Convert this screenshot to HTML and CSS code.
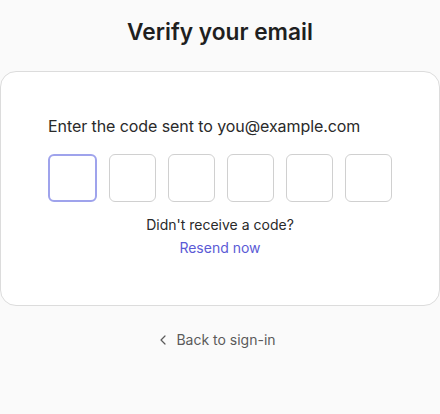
FILE: index.html
```html
<!DOCTYPE html>
<html lang="en">
<head>
    <meta charset="UTF-8">
    <meta name="viewport" content="width=device-width, initial-scale=1.0">
    <title>Verify your email</title>
    <link rel="stylesheet" href="styles.css">
</head>
<body>
<main class="page">
    <h1 class="title">Verify your email</h1>

    <div class="card">
        <p class="lead">Enter the code sent to you@example.com</p>
        <div class="code">
            <input class="digit digit-active" type="text" maxlength="1" aria-label="Digit 1">
            <input class="digit" type="text" maxlength="1" aria-label="Digit 2">
            <input class="digit" type="text" maxlength="1" aria-label="Digit 3">
            <input class="digit" type="text" maxlength="1" aria-label="Digit 4">
            <input class="digit" type="text" maxlength="1" aria-label="Digit 5">
            <input class="digit" type="text" maxlength="1" aria-label="Digit 6">
        </div>
        <p class="hint">Didn't receive a code?</p>
        <a class="resend" href="#">Resend now</a>
    </div>

    <a class="back" href="#">
        <svg width="10" height="10" viewBox="0 0 10 10" fill="none" stroke="currentColor" stroke-width="1.2" stroke-linecap="round" stroke-linejoin="round">
            <path d="M7 1 3 5l4 4"/>
        </svg>
        Back to sign-in
    </a>
</main>
</body>
</html>
```

FILE: styles.css
```css
:root {
    --bg-color: #fafafa;
    --card-bg: #ffffff;
    --border-color: #dcdcdc;
    --text-color: #1f1f1f;
    --muted-color: #5a5a5a;
    --accent-color: #5b5bd6;
    --focus-color: #9fa3ec;
}

* {
    margin: 0;
    padding: 0;
    box-sizing: border-box;
}

body {
    font-family: Inter, 'Noto Sans', sans-serif;
    background: var(--bg-color);
    color: var(--text-color);
}

.page {
    display: flex;
    flex-direction: column;
    align-items: center;
    padding-top: 18px;
}

.title {
    font-size: 22.7px;
    line-height: 28px;
    font-weight: 600;
    margin-bottom: 25px;
}

.card {
    width: 440px;
    background: var(--card-bg);
    border: 1px solid var(--border-color);
    border-radius: 16px;
    padding: 42px 47px 47px;
    display: flex;
    flex-direction: column;
    align-items: center;
}

.lead {
    align-self: stretch;
    font-size: 16px;
    line-height: 24px;
    letter-spacing: -0.08px;
    margin-bottom: 16px;
    color: #2a2a2a;
}

.code {
    display: flex;
    gap: 12px;
    align-self: stretch;
    margin-bottom: 13px;
}

.digit {
    flex: 1;
    min-width: 0;
    height: 48px;
    border: 1px solid #d0d0d0;
    border-radius: 6px;
    background: #fff;
    outline: none;
    font: inherit;
    text-align: center;
}

.digit-active {
    border: 2px solid var(--focus-color);
}

.hint {
    font-size: 14px;
    line-height: 20px;
    color: #2a2a2a;
    margin-bottom: 3px;
}

.resend {
    font-size: 14px;
    line-height: 20px;
    color: var(--accent-color);
    text-decoration: none;
}

.back {
    margin-top: 24px;
    padding-right: 6px;
    display: flex;
    align-items: center;
    gap: 8px;
    font-size: 14px;
    line-height: 20px;
    color: var(--muted-color);
    text-decoration: none;
}
```
